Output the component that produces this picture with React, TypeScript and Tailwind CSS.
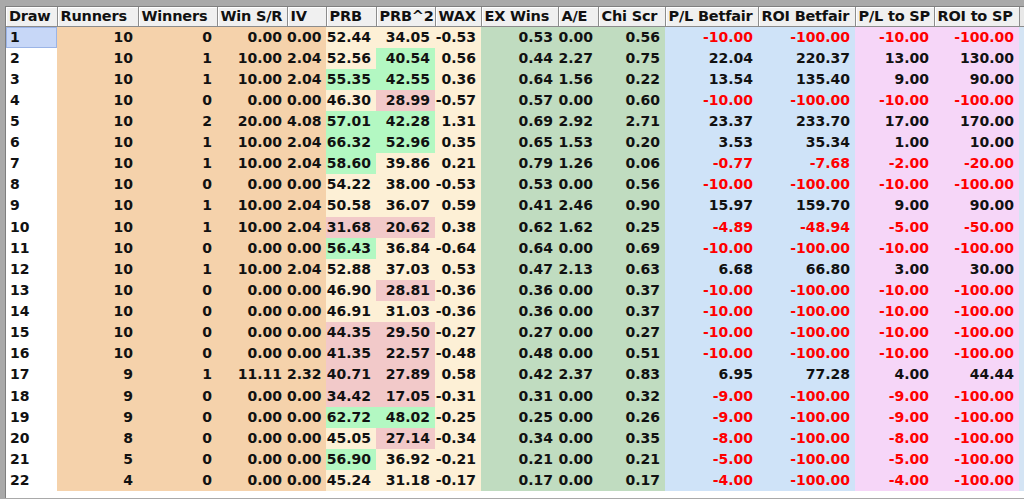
import React from 'react';

type Hl = 'g' | 'p' | null;

interface Row {
  draw: number;
  runners: number;
  winners: number;
  winSr: string;
  iv: string;
  prb: [string, Hl];
  prb2: [string, Hl];
  wax: string;
  exWins: string;
  ae: string;
  chi: string;
  plBf: string;
  roiBf: string;
  plSp: string;
  roiSp: string;
}

const r = (
  draw: number, runners: number, winners: number, winSr: string, iv: string,
  prb: [string, Hl], prb2: [string, Hl], wax: string, exWins: string, ae: string, chi: string,
  plBf: string, roiBf: string, plSp: string, roiSp: string
): Row => ({ draw, runners, winners, winSr, iv, prb, prb2, wax, exWins, ae, chi, plBf, roiBf, plSp, roiSp });

const rows: Row[] = [
  r(1, 10, 0, '0.00', '0.00', ['52.44', null], ['34.05', null], '-0.53', '0.53', '0.00', '0.56', '-10.00', '-100.00', '-10.00', '-100.00'),
  r(2, 10, 1, '10.00', '2.04', ['52.56', null], ['40.54', 'g'], '0.56', '0.44', '2.27', '0.75', '22.04', '220.37', '13.00', '130.00'),
  r(3, 10, 1, '10.00', '2.04', ['55.35', 'g'], ['42.55', 'g'], '0.36', '0.64', '1.56', '0.22', '13.54', '135.40', '9.00', '90.00'),
  r(4, 10, 0, '0.00', '0.00', ['46.30', null], ['28.99', 'p'], '-0.57', '0.57', '0.00', '0.60', '-10.00', '-100.00', '-10.00', '-100.00'),
  r(5, 10, 2, '20.00', '4.08', ['57.01', 'g'], ['42.28', 'g'], '1.31', '0.69', '2.92', '2.71', '23.37', '233.70', '17.00', '170.00'),
  r(6, 10, 1, '10.00', '2.04', ['66.32', 'g'], ['52.96', 'g'], '0.35', '0.65', '1.53', '0.20', '3.53', '35.34', '1.00', '10.00'),
  r(7, 10, 1, '10.00', '2.04', ['58.60', 'g'], ['39.86', null], '0.21', '0.79', '1.26', '0.06', '-0.77', '-7.68', '-2.00', '-20.00'),
  r(8, 10, 0, '0.00', '0.00', ['54.22', null], ['38.00', null], '-0.53', '0.53', '0.00', '0.56', '-10.00', '-100.00', '-10.00', '-100.00'),
  r(9, 10, 1, '10.00', '2.04', ['50.58', null], ['36.07', null], '0.59', '0.41', '2.46', '0.90', '15.97', '159.70', '9.00', '90.00'),
  r(10, 10, 1, '10.00', '2.04', ['31.68', 'p'], ['20.62', 'p'], '0.38', '0.62', '1.62', '0.25', '-4.89', '-48.94', '-5.00', '-50.00'),
  r(11, 10, 0, '0.00', '0.00', ['56.43', 'g'], ['36.84', null], '-0.64', '0.64', '0.00', '0.69', '-10.00', '-100.00', '-10.00', '-100.00'),
  r(12, 10, 1, '10.00', '2.04', ['52.88', null], ['37.03', null], '0.53', '0.47', '2.13', '0.63', '6.68', '66.80', '3.00', '30.00'),
  r(13, 10, 0, '0.00', '0.00', ['46.90', null], ['28.81', 'p'], '-0.36', '0.36', '0.00', '0.37', '-10.00', '-100.00', '-10.00', '-100.00'),
  r(14, 10, 0, '0.00', '0.00', ['46.91', null], ['31.03', null], '-0.36', '0.36', '0.00', '0.37', '-10.00', '-100.00', '-10.00', '-100.00'),
  r(15, 10, 0, '0.00', '0.00', ['44.35', 'p'], ['29.50', 'p'], '-0.27', '0.27', '0.00', '0.27', '-10.00', '-100.00', '-10.00', '-100.00'),
  r(16, 10, 0, '0.00', '0.00', ['41.35', 'p'], ['22.57', 'p'], '-0.48', '0.48', '0.00', '0.51', '-10.00', '-100.00', '-10.00', '-100.00'),
  r(17, 9, 1, '11.11', '2.32', ['40.71', 'p'], ['27.89', 'p'], '0.58', '0.42', '2.37', '0.83', '6.95', '77.28', '4.00', '44.44'),
  r(18, 9, 0, '0.00', '0.00', ['34.42', 'p'], ['17.05', 'p'], '-0.31', '0.31', '0.00', '0.32', '-9.00', '-100.00', '-9.00', '-100.00'),
  r(19, 9, 0, '0.00', '0.00', ['62.72', 'g'], ['48.02', 'g'], '-0.25', '0.25', '0.00', '0.26', '-9.00', '-100.00', '-9.00', '-100.00'),
  r(20, 8, 0, '0.00', '0.00', ['45.05', null], ['27.14', 'p'], '-0.34', '0.34', '0.00', '0.35', '-8.00', '-100.00', '-8.00', '-100.00'),
  r(21, 5, 0, '0.00', '0.00', ['56.90', 'g'], ['36.92', null], '-0.21', '0.21', '0.00', '0.21', '-5.00', '-100.00', '-5.00', '-100.00'),
  r(22, 4, 0, '0.00', '0.00', ['45.24', null], ['31.18', null], '-0.17', '0.17', '0.00', '0.17', '-4.00', '-100.00', '-4.00', '-100.00'),
];

const headers: { label: string; w: string }[] = [
  { label: 'Draw', w: 'w-[51px]' },
  { label: 'Runners', w: 'w-[81px]' },
  { label: 'Winners', w: 'w-[79px]' },
  { label: 'Win S/R', w: 'w-[70px]' },
  { label: 'IV', w: 'w-[39px]' },
  { label: 'PRB', w: 'w-[50px]' },
  { label: 'PRB^2', w: 'w-[59px]' },
  { label: 'WAX', w: 'w-[46px]' },
  { label: 'EX Wins', w: 'w-[77px]' },
  { label: 'A/E', w: 'w-[40px]' },
  { label: 'Chi Scr', w: 'w-[67px]' },
  { label: 'P/L Betfair', w: 'w-[93px]' },
  { label: 'ROI Betfair', w: 'w-[97px]' },
  { label: 'P/L to SP', w: 'w-[79px]' },
  { label: 'ROI to SP', w: 'w-[85px]' },
];

const PEACH = 'bg-[#f5d2ab]';
const CREAM = 'bg-[#fdf0d6]';
const SAGE = 'bg-[#c0dcc0]';
const BLUE = 'bg-[#cfe3f8]';
const LILAC = 'bg-[#f6d6f8]';

const hlBg = (h: Hl) => (h === 'g' ? 'bg-[#b3f8c2]' : h === 'p' ? 'bg-[#f2c9c9]' : CREAM);

function Num({ v, bg, money }: { v: string | number; bg: string; money?: boolean }) {
  const neg = money && String(v).startsWith('-');
  return (
    <td className={`${bg} pr-[5px] text-right whitespace-nowrap ${neg ? 'text-[#ff0000]' : 'text-[#111]'}`}>{v}</td>
  );
}

export default function App() {
  return (
    <div
      className="w-[1024px] h-[499px] overflow-hidden bg-[#a9a9a9] pl-[6px] pt-[7px]"
      style={{ fontFamily: '"DejaVu Sans", Verdana, sans-serif' }}
    >
      <div className="h-full bg-white border-l border-t border-[#7f7f7f] -ml-px -mt-px">
        <table className="table-fixed border-collapse w-[1018px] font-bold">
          <colgroup>
            {headers.map(h => (
              <col key={h.label} className={h.w} />
            ))}
            <col className="w-[5px]" />
          </colgroup>
          <thead>
            <tr className="h-[19px]">
              {headers.map(h => (
                <th
                  key={h.label}
                  className="bg-[#f0f0f0] border-r border-b border-[#8c8c8c] shadow-[inset_1px_1px_0_#ffffff] pl-[3px] text-left text-[14.5px] tracking-[-0.2px] leading-[18px] font-bold text-[#111] whitespace-nowrap overflow-hidden"
                >
                  {h.label}
                </th>
              ))}
              <th className="bg-[#e8e8e8] border-b border-[#8c8c8c]" />
            </tr>
          </thead>
          <tbody className="text-[14px] leading-[21px]">
            {rows.map(row => (
              <tr key={row.draw} className="h-[21.14px]">
                <td className="pl-[4px] text-left text-[#111] p-0">
                  {row.draw === 1 ? (
                    <div className="h-[21px] bg-[#c7d7f7] border border-[#9bb4e6] -ml-[4px] pl-[3px] leading-[19px]">1</div>
                  ) : (
                    row.draw
                  )}
                </td>
                <Num v={row.runners} bg={PEACH} />
                <Num v={row.winners} bg={PEACH} />
                <Num v={row.winSr} bg={PEACH} />
                <Num v={row.iv} bg={PEACH} />
                <Num v={row.prb[0]} bg={hlBg(row.prb[1])} />
                <Num v={row.prb2[0]} bg={hlBg(row.prb2[1])} />
                <Num v={row.wax} bg={CREAM} />
                <Num v={row.exWins} bg={SAGE} />
                <Num v={row.ae} bg={SAGE} />
                <Num v={row.chi} bg={SAGE} />
                <Num v={row.plBf} bg={BLUE} money />
                <Num v={row.roiBf} bg={BLUE} money />
                <Num v={row.plSp} bg={LILAC} money />
                <Num v={row.roiSp} bg={LILAC} money />
                <td className="bg-[#d4e4f4]" />
              </tr>
            ))}
          </tbody>
        </table>
      </div>
    </div>
  );
}
